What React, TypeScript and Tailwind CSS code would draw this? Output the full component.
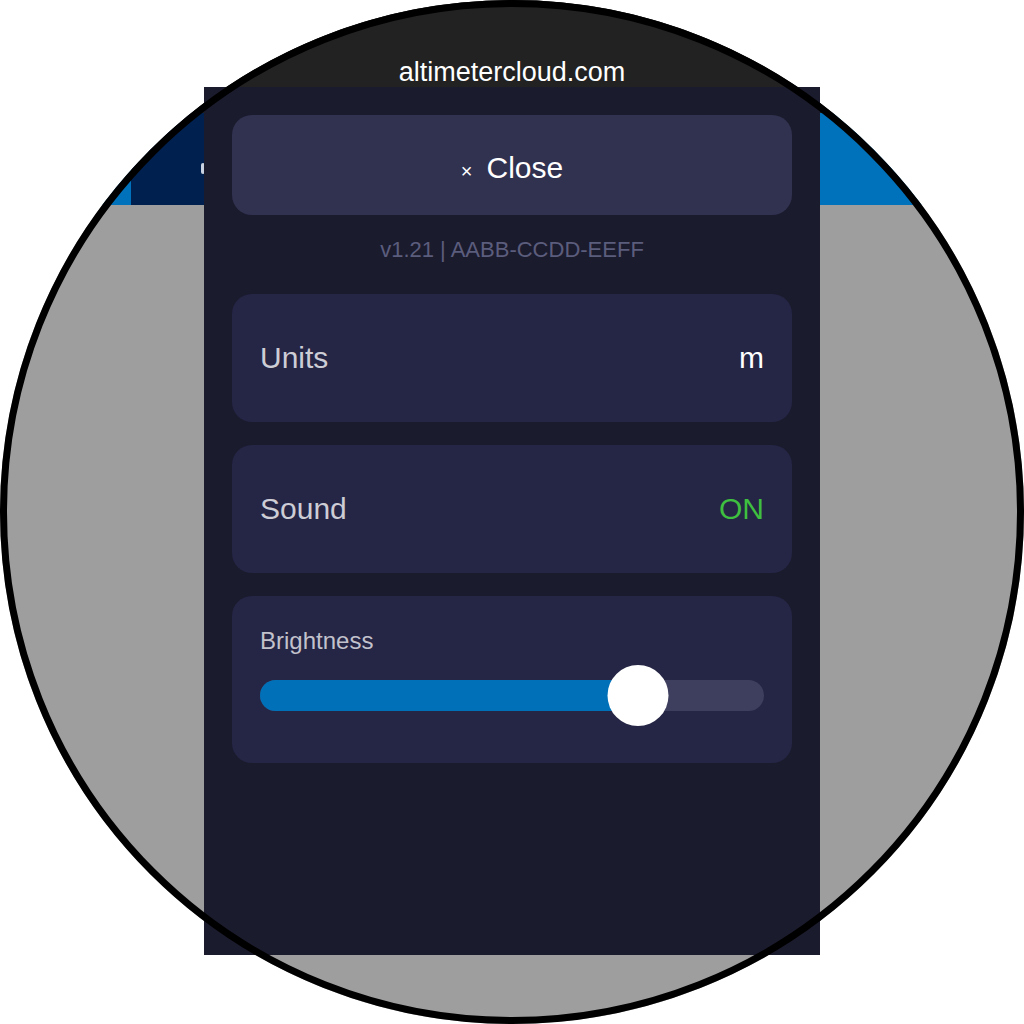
export default function App() {
  return (
    <div
      className="relative w-[1024px] h-[1024px] bg-white overflow-hidden"
      style={{ fontFamily: '"Liberation Sans", Arial, sans-serif' }}
    >
      {/* page behind the settings sheet, clipped to the round watch face */}
      <div className="absolute inset-0 rounded-full overflow-hidden bg-[#9e9e9e] flex flex-col">
        <div className="h-[113px] shrink-0 bg-[#222222] flex justify-center pt-[59px]">
          <span className="text-[27px] leading-none text-white">altimetercloud.com</span>
        </div>
        <div className="h-[92px] shrink-0 flex">
          <div className="w-[131px] bg-[#0072bb]" />
          <div className="w-[120px] bg-[#00214f] relative">
            <div className="absolute left-[70px] top-[50px] w-[4px] h-[11px] rounded-sm bg-[#c8d2e0]" />
          </div>
          <div className="flex-1 bg-[#0072bb]" />
        </div>
        <div className="flex-1" />
      </div>

      {/* settings sheet */}
      <div className="absolute left-[204px] top-[87px] w-[616px] h-[868px] bg-[#1b1b2e] px-7 pt-7 flex flex-col">
        <button className="h-[100px] rounded-[20px] bg-[#313150] flex items-center justify-center gap-[14px] pt-[6px] text-white">
          <span className="relative top-[3px] text-[20px] leading-none">×</span>
          <span className="text-[30px] leading-none">Close</span>
        </button>

        <div className="h-[79px] flex items-center justify-center pb-[10px] text-[22px] leading-none text-[#5b5d7d]">
          v1.21 | AABB-CCDD-EEFF
        </div>

        <div className="flex flex-col gap-[23px]">
          <div className="h-[128px] rounded-[20px] bg-[#252545] px-7 flex items-center justify-between text-[30px] leading-none">
            <span className="text-[#cdcdd6]">Units</span>
            <span className="text-white">m</span>
          </div>

          <div className="h-[128px] rounded-[20px] bg-[#252545] px-7 flex items-center justify-between text-[30px] leading-none">
            <span className="text-[#cdcdd6]">Sound</span>
            <span className="text-[#3fbf3f]">ON</span>
          </div>

          <div className="h-[167px] rounded-[20px] bg-[#252545] px-7 pt-[30px]">
            <div className="text-[24px] leading-[30px] text-[#c2c2cc]">Brightness</div>
            <div className="relative mt-[9px] h-[61px] flex items-center">
              <div className="w-full h-[31px] rounded-full bg-[#3e3e5e] overflow-hidden">
                <div className="w-[75%] h-full bg-[#0070b8]" />
              </div>
              <div className="absolute left-[75%] top-0 -translate-x-1/2 w-[61px] h-[61px] rounded-full bg-white" />
            </div>
          </div>
        </div>
      </div>

      {/* bezel */}
      <div className="absolute inset-0 rounded-full border-[7px] border-black pointer-events-none" />
    </div>
  );
}
